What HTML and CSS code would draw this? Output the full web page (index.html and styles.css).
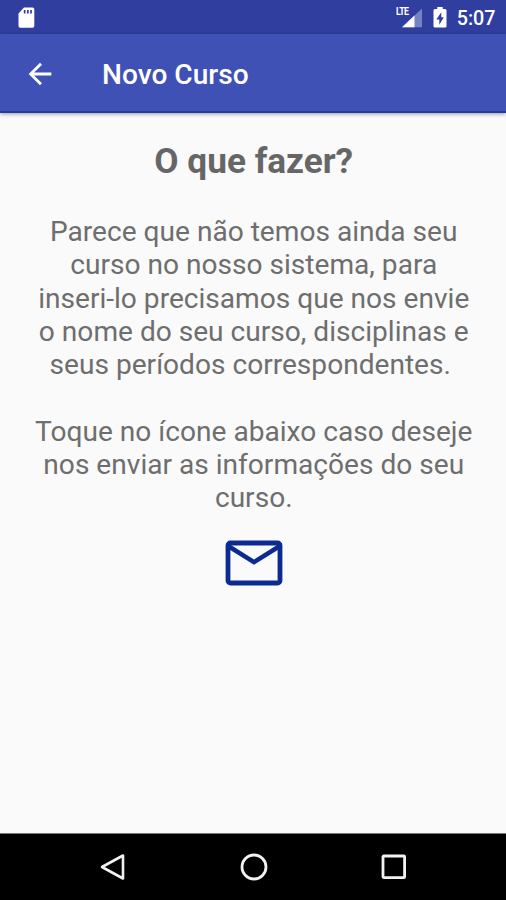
FILE: index.html
```html
<!DOCTYPE html>
<html lang="pt-BR">
<head>
<meta charset="utf-8">
<title>Novo Curso</title>
<link rel="stylesheet" href="styles.css">
</head>
<body>
<div class="screen">
  <div class="status-bar">
    <svg class="sd-card" width="17" height="22" viewBox="0 0 17 22"><path fill="#fff" fill-rule="evenodd" d="M6 .5h8.500q1.800 0 1.800 1.800v16.700q0 1.800-1.800 1.800H2.300Q.5 20.800.5 19V6.500zM5.800 3v3.500h1.700V3zM9 3v3.500h1.700V3zM12.200 3v3.500h1.700V3z"/></svg>
    <div class="indicators">
      <div class="signal">
        <svg width="26" height="22" viewBox="0 0 26 22"><path fill="#7782c2" d="M26 1.500v18.700H6z"/><path fill="#fff" d="M18.500 8.500v11.700H6z"/></svg>
        <span class="network">LTE</span>
      </div>
      <svg class="battery" width="14" height="21" viewBox="0 0 14 21"><path fill="#fff" fill-rule="evenodd" d="M4.300 0h5.400v2H12q1.500 0 1.500 1.500v15.700q0 1.300-1.500 1.300H2q-1.500 0-1.500-1.300V3.500Q.5 2 2 2h2.300zM8.300 5.200 3.300 12.500h3v5.300l4.500-7.600H8.300z"/></svg>
      <span class="clock">5:07</span>
    </div>
  </div>
  <header class="app-bar">
    <svg class="back" width="34" height="34" viewBox="0 0 24 24"><path fill="#fff" d="M20 11H7.830l5.590-5.590L12 4l-8 8 8 8 1.410-1.410L7.830 13H20v-2z"/></svg>
    <h1 class="title">Novo Curso</h1>
  </header>
  <main class="content">
    <h2 class="heading">O que fazer?</h2>
    <p class="text">Parece que não temos ainda seu<br>curso no nosso sistema, para<br>inseri-lo precisamos que nos envie<br>o nome do seu curso, disciplinas e<br>seus períodos correspondentes.&nbsp;</p>
    <p class="text">Toque no ícone abaixo caso deseje<br>nos enviar as informações do seu<br>curso.</p>
    <svg class="mail" width="58" height="46" viewBox="0 0 58 46"><rect x="3" y="3" width="52" height="40" rx="2.500" fill="none" stroke="#0b2b91" stroke-width="4.800"/><path d="M4 6.500 29 22.200 54 6.500" fill="none" stroke="#0b2b91" stroke-width="4.500"/></svg>
  </main>
  <nav class="nav-bar">
    <svg width="30" height="30" viewBox="0 0 30 30"><path d="M25 3.500v23L4 15z" fill="none" stroke="#f2f2f2" stroke-width="2.600" stroke-linejoin="round"/></svg>
    <svg width="30" height="30" viewBox="0 0 30 30"><circle cx="15" cy="15" r="12" fill="none" stroke="#f2f2f2" stroke-width="2.800"/></svg>
    <svg width="30" height="30" viewBox="0 0 30 30"><rect x="4" y="4" width="21.600" height="21.600" rx=".8" fill="none" stroke="#f2f2f2" stroke-width="2.800"/></svg>
  </nav>
</div>
</body>
</html>
```
FILE: styles.css
```css
* { box-sizing: border-box; }
body {
  margin: 0;
  font-family: Roboto, "Liberation Sans", sans-serif;
}
h1, h2, p { margin: 0; }
svg { display: block; flex: none; }
.screen {
  display: flex;
  flex-direction: column;
  height: 900px;
  overflow: hidden;
  background: #fafafa;
}
.status-bar {
  display: flex;
  justify-content: space-between;
  height: 34px;
  padding: 7px 10.5px 0 17.500px;
  background: #303f9f;
  color: #fff;
}
.indicators { display: flex; }
.signal { position: relative; margin-right: 11px; }
.network {
  position: absolute;
  left: 0;
  top: 0;
  padding-right: 1px;
  background: #303f9f;
  font-size: 11px;
  font-weight: 700;
  line-height: 10px;
  letter-spacing: -0.7px;
  transform: scaleX(0.8);
  transform-origin: left top;
}
.battery { margin-right: 10px; }
.clock {
  font-size: 19.7px;
  font-weight: 500;
  line-height: 23px;
}
.app-bar {
  display: flex;
  align-items: center;
  height: 79px;
  padding: 2px 0 0 23px;
  background: #3f51b5;
  border-bottom: 2px solid #213da4;
  box-shadow: 0 1px 4px rgba(0, 0, 0, 0.4);
  color: #fff;
}
.title {
  margin-left: 45px;
  padding-top: 2px;
  font-size: 28.1px;
  font-weight: 500;
}
.content {
  flex: 1;
  display: flex;
  flex-direction: column;
  align-items: center;
  padding: 27px 0 0 1.500px;
  color: #6e6e6e;
  text-align: center;
  white-space: nowrap;
}
.heading {
  margin-bottom: 33px;
  color: #666;
  font-size: 35.2px;
  font-weight: 700;
  line-height: 42px;
}
.text {
  margin-bottom: 33.3px;
  font-size: 28.1px;
  line-height: 33.3px;
}
.mail { margin-top: -8px; }
.nav-bar {
  display: flex;
  justify-content: center;
  gap: 110.500px;
  height: 67px;
  padding: 17.500px 0 0 1px;
  border-top: 1px solid #777;
  background: #000;
}
```
